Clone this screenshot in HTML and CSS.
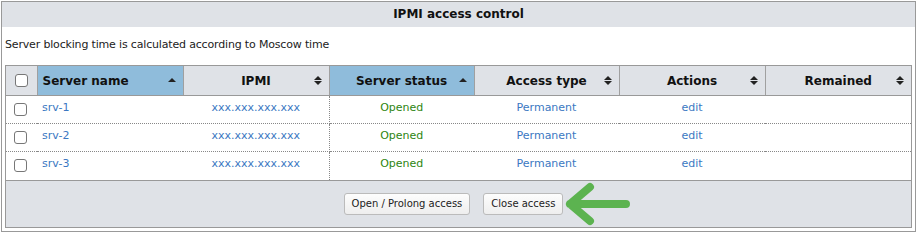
FILE: index.html
```html
<!DOCTYPE html>
<html lang="en">
<head>
    <meta charset="UTF-8">
    <title>IPMI access control</title>
    <link rel="stylesheet" href="styles.css">
</head>
<body>

<div class="panel">
    <div class="panel-title">IPMI access control</div>
    <div class="note">Server blocking time is calculated according to Moscow time</div>

    <div class="grid">
        <table>
            <colgroup>
                <col class="c-check">
                <col class="c-wide">
                <col class="c-wide">
                <col class="c-mid">
                <col class="c-mid">
                <col class="c-wide">
                <col>
            </colgroup>
            <thead>
                <tr>
                    <th class="check"><input type="checkbox"></th>
                    <th class="sorted left">Server name<span class="sort asc"></span></th>
                    <th>IPMI<span class="sort"></span></th>
                    <th class="sorted">Server status<span class="sort asc"></span></th>
                    <th>Access type<span class="sort"></span></th>
                    <th>Actions<span class="sort"></span></th>
                    <th>Remained<span class="sort"></span></th>
                </tr>
            </thead>
            <tbody>
                <tr>
                    <td class="check"><input type="checkbox"></td>
                    <td class="left"><a href="#">srv-1</a></td>
                    <td class="ipmi"><a href="#">xxx.xxx.xxx.xxx</a></td>
                    <td class="opened">Opened</td>
                    <td><a href="#">Permanent</a></td>
                    <td><a href="#">edit</a></td>
                    <td></td>
                </tr>
                <tr>
                    <td class="check"><input type="checkbox"></td>
                    <td class="left"><a href="#">srv-2</a></td>
                    <td class="ipmi"><a href="#">xxx.xxx.xxx.xxx</a></td>
                    <td class="opened">Opened</td>
                    <td><a href="#">Permanent</a></td>
                    <td><a href="#">edit</a></td>
                    <td></td>
                </tr>
                <tr>
                    <td class="check"><input type="checkbox"></td>
                    <td class="left"><a href="#">srv-3</a></td>
                    <td class="ipmi"><a href="#">xxx.xxx.xxx.xxx</a></td>
                    <td class="opened">Opened</td>
                    <td><a href="#">Permanent</a></td>
                    <td><a href="#">edit</a></td>
                    <td></td>
                </tr>
            </tbody>
        </table>

        <div class="grid-footer">
            <button type="button">Open / Prolong access</button>
            <span class="hint">
                <button type="button">Close access</button>
                <svg class="arrow" width="66" height="44" viewBox="0 0 66 44">
                    <path d="M26 5 L6 22 L26 39 M6 22 H62" fill="none" stroke="#5cb350" stroke-width="8" stroke-linecap="round" stroke-linejoin="round"/>
                </svg>
            </span>
        </div>
    </div>
</div>

</body>
</html>
```

FILE: styles.css
```css
body {
    margin: 0;
    font-family: "DejaVu Sans", Verdana, sans-serif;
    font-size: 11px;
    color: #222;
    background: #fff;
}

.panel {
    margin: 1px 1px 0 1px;
    border: 1px solid #999;
    padding-bottom: 3px;
}

.panel-title {
    height: 25px;
    line-height: 25px;
    background: #dfe2e7;
    text-align: center;
    font-weight: bold;
    font-size: 12px;
    color: #111;
}

.note {
    height: 38px;
    line-height: 36px;
    padding-left: 3px;
    letter-spacing: -0.17px;
}

.grid {
    margin: 0 3px;
    border: 1px solid #999;
}

table {
    width: 100%;
    border-collapse: collapse;
    table-layout: fixed;
}

.c-check { width: 31px; }
.c-wide { width: 146px; }
.c-mid { width: 145px; }

th {
    position: relative;
    height: 29px;
    padding: 0 20px;
    background: #dfe2e7;
    border-right: 1px solid #a0a0a0;
    border-bottom: 1px solid #999;
    font-size: 12px;
    font-weight: bold;
    color: #111;
    text-align: center;
}

th:last-child {
    border-right: none;
}

th.sorted {
    background: #8fbcdb;
}

th.left,
td.left {
    text-align: left;
    padding-left: 5px;
}

th.check,
td.check {
    padding: 0;
    text-align: center;
}

/* sort marks: up and down triangles */
.sort {
    position: absolute;
    right: 7px;
    top: 10px;
    width: 8px;
    height: 9px;
}

.sort::before,
.sort::after {
    content: "";
    position: absolute;
    left: 0;
    border-left: 4px solid transparent;
    border-right: 4px solid transparent;
}

.sort::before {
    top: 0;
    border-bottom: 4px solid #222;
}

.sort::after {
    top: 5px;
    border-top: 4px solid #222;
}

.sort.asc {
    top: 12px;
}

.sort.asc::after {
    display: none;
}

tbody tr {
    height: 28px;
}

td {
    padding: 5px 4px 0;
    vertical-align: top;
    line-height: 14px;
    text-align: center;
    border-bottom: 1px dotted #888;
}

tbody tr:last-child td {
    border-bottom: none;
}

td.check {
    padding-top: 7px;
}

td.ipmi {
    border-right: 1px dotted #888;
}

input[type="checkbox"] {
    appearance: none;
    -webkit-appearance: none;
    display: block;
    margin: 0 0 0 8px;
    width: 13px;
    height: 13px;
    border: 1px solid #777;
    border-radius: 3px;
    background: #fff;
}

th input[type="checkbox"] {
    margin-left: 9px;
}

a {
    color: #3b78c2;
    text-decoration: none;
}

.opened {
    color: #2e8510;
}

.grid-footer {
    height: 46px;
    border-top: 1px solid #999;
    background: #dfe2e7;
    display: flex;
    justify-content: center;
    align-items: center;
    gap: 13px;
    padding-right: 10px;
}

.hint {
    position: relative;
}

button {
    display: block;
    height: 22px;
    padding: 0 7px;
    font-family: "DejaVu Sans", Verdana, sans-serif;
    font-size: 10px;
    color: #222;
    background: linear-gradient(#fdfdfd, #eeeeee);
    border: 1px solid #bbb;
    border-radius: 3px;
    cursor: pointer;
}

.arrow {
    position: absolute;
    left: 100%;
    top: -11px;
    margin-left: 1px;
}
```
